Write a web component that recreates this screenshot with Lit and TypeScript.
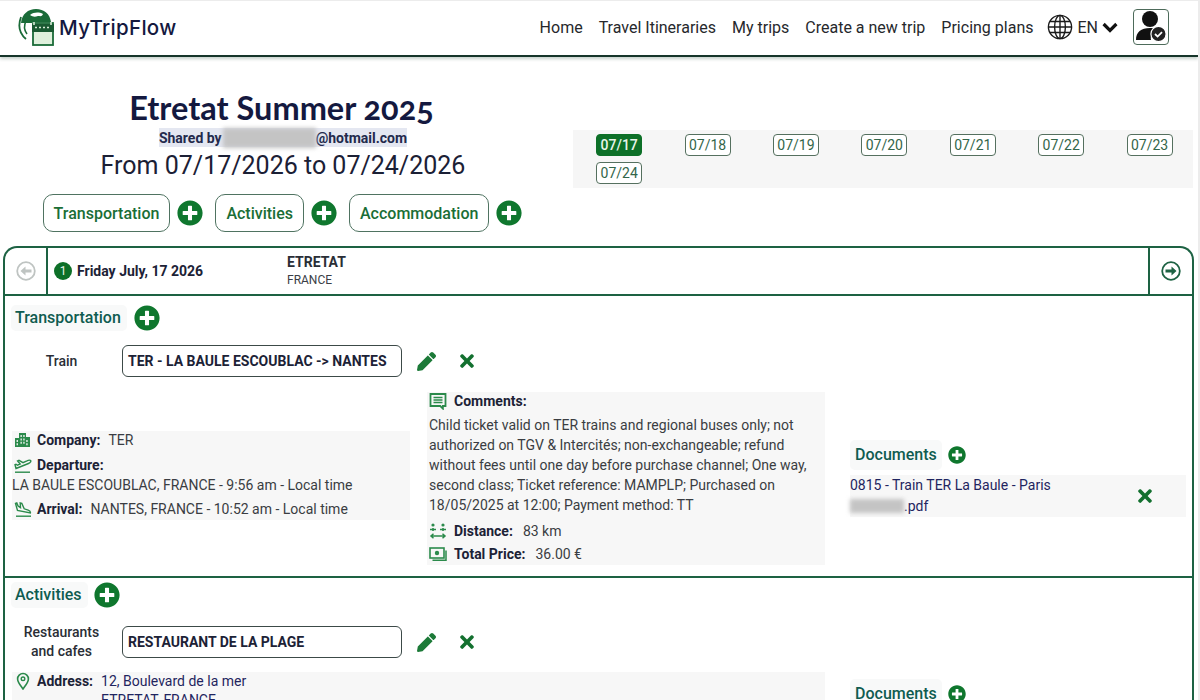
import { LitElement, html, css, svg } from 'lit';
import { customElement } from 'lit/decorators.js';

const plus = (size: number) => html`<svg class="ico" width=${size} height=${size} viewBox="0 0 512 512"><path fill="#0f772e" d="M256 8C119 8 8 119 8 256s111 248 248 248 248-111 248-248S393 8 256 8zm144 276c0 6.6-5.4 12-12 12h-92v92c0 6.6-5.4 12-12 12h-56c-6.6 0-12-5.4-12-12v-92h-92c-6.6 0-12-5.4-12-12v-56c0-6.6 5.4-12 12-12h92v-92c0-6.6 5.4-12 12-12h56c6.6 0 12 5.4 12 12v92h92c6.6 0 12 5.4 12 12v56z"/></svg>`;

const pencil = html`<svg class="ico" width="19" height="19" viewBox="0 0 512 512"><path fill="#1c7a38" d="M497.9 142.1l-46.1 46.1c-4.7 4.7-12.3 4.7-17 0l-111-111c-4.7-4.7-4.7-12.3 0-17l46.1-46.1c18.7-18.7 49.1-18.7 67.9 0l60.1 60.1c18.8 18.7 18.8 49.1 0 67.9zM284.2 99.8L21.6 362.4.4 483.9c-2.9 16.4 11.4 30.6 27.8 27.8l121.5-21.3 262.6-262.6c4.7-4.7 4.7-12.3 0-17l-111-111c-4.8-4.7-12.4-4.7-17.1 0z"/></svg>`;

const cross = html`<svg class="ico" width="16" height="20" viewBox="0 0 352 512"><path fill="#13702f" d="M242.72 256l100.07-100.07c12.28-12.28 12.28-32.19 0-44.48l-22.24-22.24c-12.28-12.28-32.19-12.28-44.48 0L176 189.28 75.93 89.21c-12.28-12.28-32.19-12.28-44.48 0L9.21 111.45c-12.28 12.28-12.28 32.19 0 44.48L109.28 256 9.21 356.07c-12.28 12.28-12.28 32.19 0 44.48l22.24 22.24c12.28 12.28 32.2 12.28 44.48 0L176 322.72l100.07 100.07c12.28 12.28 32.2 12.28 44.48 0l22.24-22.24c12.28-12.28 12.28-32.19 0-44.48L242.72 256z"/></svg>`;

// small outline icons in the detail rows
const detailIcon = (body: unknown) => html`<svg class="ico" width="18" height="18" viewBox="0 0 18 18" fill="none" stroke="#2b8a4b" stroke-width="1.4">${body}</svg>`;

const icons = {
  company: detailIcon(svg`<path fill="#2b8a4b" stroke="none" d="M5 2h7v4h4v10H1V7h4zM6.5 4v2h1.3V4zm2.8 0v2h1.3V4zM6.5 7.5v2h1.3v-2zm2.8 0v2h1.3v-2zM2.6 9v2h1.3V9zm0 3.2v2h1.3v-2zm3.9-1.4v2h1.3v-2zm2.8 0v2h1.3v-2zm3-1.8v2h1.3V9zm0 3.2v2h1.3v-2z"/>`),
  departure: detailIcon(svg`<path d="M1 16.2h15"/><path d="M2 12.5l12.5-5c2-.8 3-2.5 1.8-3.2-1-.5-2.4 0-3.4.5L9 6.6 5 4.4 3.6 5l2.6 3L3.4 9.2 2 8.2 1 8.6z"/>`),
  arrival: detailIcon(svg`<path d="M2 16.2h15"/><path d="M1.5 3.5l1.3-.6 1.3 3.2 2.4 1.6L6.2 3l1.6.4 2.4 5.4 4 1.4c1.5.5 2.4 1.6 2.2 2.8L3.5 10.5z"/>`),
  comments: detailIcon(svg`<path d="M1.5 2h15v12h-2.6v2.6L11.3 14H1.5z" stroke-width="1.8"/><path d="M4.5 5.5h9M4.5 8h9M4.5 10.5h9"/>`),
  distance: detailIcon(svg`<circle cx="4" cy="3" r="1.6" fill="#2b8a4b" stroke="none"/><circle cx="14" cy="3" r="1.6" fill="#2b8a4b" stroke="none"/><path d="M1 7.5h6M11 7.5h6M4 6v3M14 6v3" stroke-width="1.6"/><path d="M2 14h14M4.5 11.8L2 14l2.5 2.2M13.5 11.8L16 14l-2.5 2.2" stroke-width="1.5"/>`),
  price: detailIcon(svg`<rect x="1" y="3" width="14" height="10" stroke-width="1.6"/><circle cx="8" cy="8" r="2.2" fill="#2b8a4b" stroke="none"/><path d="M17 5.5v9.7H3.5" stroke-width="1.5"/>`),
  pin: detailIcon(svg`<path d="M9 17C6 12.8 3.6 10 3.6 6.9a5.4 5.4 0 0 1 10.8 0C14.4 10 12 12.8 9 17z" stroke-width="1.6"/><circle cx="9" cy="6.8" r="1.8"/>`),
};

const dates = ['07/17', '07/18', '07/19', '07/20', '07/21', '07/22', '07/23', '07/24'];

@customElement('app-root')
export class AppRoot extends LitElement {
  static styles = css`
    :host {
      display: block;
      height: 700px;
      overflow: hidden;
      background: #ececec;
      padding-top: 1px;
      box-sizing: border-box;
      font-family: Roboto, "Liberation Sans", sans-serif;
      color: #1c2236;
    }
    * { box-sizing: border-box; }
    .ico { display: block; flex: none; }
    .page { width: 1198px; height: 699px; background: #fff; overflow: hidden; }

    header {
      height: 56px;
      display: flex;
      align-items: center;
      justify-content: space-between;
      padding: 0 29px 2px 18px;
      border-bottom: 2px solid #16352a;
      box-shadow: 0 2px 3px rgba(30, 70, 50, 0.25);
    }
    .brand { display: flex; align-items: center; gap: 5px; }
    .brand-name { font-family: Inter, sans-serif; font-size: 20.5px; font-weight: 500; color: #14193f; letter-spacing: 0.3px; }
    nav { display: flex; align-items: center; gap: 16px; font-size: 16px; color: #26282c; }
    .lang { display: flex; align-items: center; gap: 4px; margin-left: -2px; }
    .user { width: 36px; height: 36px; border: 1px solid #4d6b5a; border-radius: 4px; margin-left: -1px; display: flex; align-items: center; justify-content: center; }

    .trip { display: grid; grid-template-columns: 573px 620px; height: 167px; padding: 32px 0 0; }
    .trip-left { display: flex; flex-direction: column; align-items: center; width: 566px; }
    h1 { margin: 0 3px 0 0; font-family: Lato, sans-serif; font-size: 32.5px; line-height: 38px; font-weight: 700; color: #14193f; font-variant-numeric: oldstyle-nums; }
    .shared { display: inline-flex; align-items: center; height: 19px; margin-top: 1px; background: #e4e7f1; font-size: 14px; font-weight: 700; color: #232a4c; }
    .blur { display: inline-block; width: 93px; height: 20px; margin-left: 1px; background: #c4c4c4; filter: blur(2px); }
    .range { font-size: 25px; line-height: 34px; margin-top: 2px; color: #1b2035; }
    .actions { display: flex; align-items: center; margin-top: 11px; margin-left: -1px; }
    .pill { height: 38px; padding: 0 10px; display: flex; align-items: center; border: 1px solid #4f7361; border-radius: 10px; font-size: 16px; font-weight: 500; color: #1a6e36; }
    .actions .ico { margin: 0 12px 0 7px; }
    .actions .ico:last-child { margin-right: 0; }

    .days { align-self: start; margin-top: 41px; background: #f6f6f6; height: 58px; padding: 4px 0 0 2px; display: grid; grid-template-columns: repeat(7, 88.4px); grid-auto-rows: 22px; row-gap: 6px; justify-items: center; }
    .day { width: 46px; height: 22px; border: 1px solid #55705f; border-radius: 4px; background: #fff; color: #33664a; font-size: 14px; display: flex; align-items: center; justify-content: center; }
    .day.on { background: #0d7028; border-color: #0d7028; color: #e8f5ea; font-weight: 500; }

    .card { margin: 22px 4px 0 3px; border: 2px solid #1d6243; border-radius: 14px 14px 0 0; border-bottom: 0; }
    .card-top { display: grid; grid-template-columns: 43px 1fr 44px; height: 48px; border-bottom: 2px solid #1d6243; }
    .arrow { display: flex; align-items: center; justify-content: center; }
    .arrow:first-child { border-right: 2px solid #1d6243; }
    .arrow:last-child { border-left: 2px solid #1d6243; }
    .day-info { display: flex; align-items: center; padding-left: 6px; }
    .num { width: 18px; height: 18px; margin-top: -1px; border-radius: 50%; background: #0d7028; color: #e8f5ea; font-size: 12px; display: flex; align-items: center; justify-content: center; margin-right: 5px; }
    .day-date { width: 210px; margin-top: -1px; font-size: 14px; font-weight: 700; color: #1c2236; }
    .place { padding-top: 2px; }
    .city { font-size: 14px; font-weight: 700; line-height: 17px; color: #2a2e36; }
    .country { font-size: 12px; font-weight: 400; line-height: 19px; color: #3a3e46; }

    .section + .section { border-top: 2px solid #1d6243; }
    .sec-head { display: flex; align-items: center; gap: 7px; }
    .sec-title { padding: 0 6px 0 4px; background: #f8f9f9; border-radius: 5px; font-size: 16px; font-weight: 500; color: #0f5c50; line-height: 26px; }
    .transport .sec-head { padding: 9px 0 0 6px; }
    .activity .sec-head { padding: 4px 0 0 6px; gap: 6px; }

    .item { display: flex; align-items: center; }
    .item-type { width: 113px; text-align: center; font-size: 14px; font-weight: 500; line-height: 19px; color: #2a2e36; }
    .item-name { width: 280px; height: 32px; margin-left: 4px; padding-left: 5px; display: flex; align-items: center; border: 1px solid #3c4a48; border-radius: 6px; font-size: 14px; font-weight: 700; color: #1c2236; }
    .item .ico:nth-of-type(1) { margin-left: 15px; }
    .item .ico:nth-of-type(2) { margin-left: 23px; }
    .transport .item { margin-top: 14px; }
    .activity .item { margin-top: 15px; }

    .details { display: grid; grid-template-columns: 398px 398px 344px; column-gap: 17px; align-items: center; padding-left: 7px; }
    .details > :nth-child(3) { margin-left: 8px; }
    .transport .details { margin-top: 15px; padding-bottom: 11px; }
    .box { background: #f7f7f7; font-size: 14px; line-height: 20px; color: #3a3d42; }
    .line { display: flex; align-items: center; height: 22px; gap: 5px; padding-left: 2px; }
    .line b { font-weight: 700; color: #1c2236; }
    .line span { margin-left: 3px; }
    .plain { line-height: 19px; }
    .left-box { margin-bottom: 6px; }
    .left-box .line:nth-child(1) { height: 18px; }
    .left-box .line:nth-child(2) { margin-top: 5px; }
    .left-box .line:nth-child(4) { margin-top: 3px; }
    .mid-box { padding-left: 2px; }
    .mid-box .line { padding-left: 0; gap: 7px; }
    .mid-box .line:nth-child(1) { height: 18px; }
    .mid-box .line:nth-child(3) { height: 24px; margin-top: 4px; }
    .comment { margin-top: 5px; }

    .doc-head { display: flex; align-items: center; gap: 6px; }
    .doc-title { padding: 0 5px; line-height: 30px; font-size: 16px; font-weight: 500; color: #0f5c50; background: #f8f9f9; border-radius: 5px; }
    .doc { display: flex; align-items: center; justify-content: space-between; margin-top: 5px; height: 42px; background: #f7f7f7; color: #1f2560; font-size: 14px; line-height: 21px; padding: 0 33px 0 0; }
    .blob { display: inline-block; width: 54px; height: 14px; vertical-align: -2px; background: #c4c4c4; filter: blur(2px); }

    .activity .details { grid-template-columns: 813px 336px; column-gap: 25px; align-items: start; margin-top: 11px; }
    .activity .details > :nth-child(2) { margin-top: 7px; }
    .addr { display: grid; grid-template-columns: auto 1fr; height: 60px; padding: 0 0 0 2px; column-gap: 8px; }
    .addr b { font-weight: 700; color: #1c2236; line-height: 18px; }
    .addr .val { color: #1f2560; line-height: 19px; }
    .addr .head { display: flex; gap: 5px; }
  `;

  render() {
    return html`
      <div class="page">
        <header>
          <div class="brand">
            <svg class="ico" width="36" height="38" viewBox="0 0 36 38">
              <path d="M3 15C4 6 10 1 18 1s14 5 15 13H14v1z" fill="#1a6b38"/>
              <path d="M12 7c4-3 9-3 13-1-1 3-3 2-5 2-3 1-5 1-8-1z" fill="#fff"/>
              <path d="M3 9C0 17 1 25 8 31" fill="none" stroke="#1a6b38" stroke-width="1.8"/>
              <path d="M8 13c-2 4-2 9 1 13" fill="none" stroke="#1a6b38" stroke-width="1.6"/>
              <rect x="15" y="15" width="20" height="22" fill="#dff0dc" stroke="#1a6b38" stroke-width="1.8"/>
              <rect x="14" y="16" width="22" height="8" fill="#1a5a32"/>
              <path d="M17 19.5h2M21 19.5h2M25 19.5h2M29 19.5h2M16 14v3M33 14v3" stroke="#d8ecd8" stroke-width="1.6"/>
            </svg>
            <span class="brand-name">MyTripFlow</span>
          </div>
          <nav>
            <span>Home</span>
            <span>Travel Itineraries</span>
            <span>My trips</span>
            <span>Create a new trip</span>
            <span>Pricing plans</span>
            <div class="lang">
              <svg class="ico" width="26" height="26" viewBox="0 0 26 26" fill="none" stroke="#1b1b1b" stroke-width="1.4">
                <circle cx="13" cy="13" r="11.6"/>
                <ellipse cx="13" cy="13" rx="5.4" ry="11.6"/>
                <path d="M13 1.4v23.2M1.4 13h23.2M3 7.5h20M3 18.5h20"/>
              </svg>
              <span>EN</span>
              <svg class="ico" width="16" height="11" viewBox="0 0 16 11" fill="none" stroke="#111" stroke-width="3.2"><path d="M1.6 2l6.4 6.4L14.4 2"/></svg>
            </div>
            <div class="user">
              <svg class="ico" width="32" height="32" viewBox="0 0 32 32">
                <circle cx="15" cy="8" r="8" fill="#111"/>
                <path d="M1 29c0-8 5-12 14-12 3 0 5 .4 7 1.2-4 1-7 5.8-6 10.8z" fill="#111"/>
                <circle cx="23.5" cy="23" r="7.6" fill="#222" stroke="#fff" stroke-width="1.2"/>
                <path d="M20 23l2.6 2.6 4.4-4.4" fill="none" stroke="#fff" stroke-width="1.8"/>
              </svg>
            </div>
          </nav>
        </header>

        <section class="trip">
          <div class="trip-left">
            <h1>Etretat Summer 2025</h1>
            <div class="shared">Shared by<i class="blur"></i>@hotmail.com</div>
            <div class="range">From 07/17/2026 to 07/24/2026</div>
            <div class="actions">
              <div class="pill">Transportation</div>${plus(26)}
              <div class="pill">Activities</div>${plus(26)}
              <div class="pill">Accommodation</div>${plus(26)}
            </div>
          </div>
          <div class="days">
            ${dates.map((d, i) => html`<div class="day ${i === 0 ? 'on' : ''}">${d}</div>`)}
          </div>
        </section>

        <div class="card">
          <div class="card-top">
            <div class="arrow">
              <svg class="ico" width="20" height="20" viewBox="0 0 20 20"><circle cx="10" cy="10" r="8.8" fill="none" stroke="#bfc4c2" stroke-width="1.8"/><path d="M4.5 10l5-4.5v3h6v3h-6v3z" fill="#bfc4c2"/></svg>
            </div>
            <div class="day-info">
              <div class="num">1</div>
              <div class="day-date">Friday July, 17 2026</div>
              <div class="place">
                <div class="city">ETRETAT</div>
                <div class="country">FRANCE</div>
              </div>
            </div>
            <div class="arrow">
              <svg class="ico" width="20" height="20" viewBox="0 0 20 20"><circle cx="10" cy="10" r="8.8" fill="none" stroke="#1d6243" stroke-width="1.8"/><path d="M15.5 10l-5-4.5v3h-6v3h6v3z" fill="#1d6243"/></svg>
            </div>
          </div>

          <div class="section transport">
            <div class="sec-head"><span class="sec-title">Transportation</span>${plus(26)}</div>
            <div class="item">
              <div class="item-type">Train</div>
              <div class="item-name">TER - LA BAULE ESCOUBLAC -> NANTES</div>
              ${pencil}${cross}
            </div>
            <div class="details">
              <div class="box left-box">
                <div class="line">${icons.company}<b>Company:</b><span>TER</span></div>
                <div class="line">${icons.departure}<b>Departure:</b></div>
                <div class="plain">LA BAULE ESCOUBLAC, FRANCE - 9:56 am - Local time</div>
                <div class="line">${icons.arrival}<b>Arrival:</b><span>NANTES, FRANCE - 10:52 am - Local time</span></div>
              </div>
              <div class="box mid-box">
                <div class="line">${icons.comments}<b>Comments:</b></div>
                <div class="comment">Child ticket valid on TER trains and regional buses only; not authorized on TGV &amp; Intercités; non-exchangeable; refund without fees until one day before purchase channel; One way, second class; Ticket reference: MAMPLP; Purchased on 18/05/2025 at 12:00; Payment method: TT</div>
                <div class="line">${icons.distance}<b>Distance:</b><span>83 km</span></div>
                <div class="line">${icons.price}<b>Total Price:</b><span>36.00 €</span></div>
              </div>
              <div>
                <div class="doc-head"><span class="doc-title">Documents</span>${plus(18)}</div>
                <div class="doc">
                  <div>0815 - Train TER La Baule - Paris<br /><i class="blob"></i>.pdf</div>
                  ${cross}
                </div>
              </div>
            </div>
          </div>

          <div class="section activity">
            <div class="sec-head"><span class="sec-title">Activities</span>${plus(26)}</div>
            <div class="item">
              <div class="item-type">Restaurants<br />and cafes</div>
              <div class="item-name">RESTAURANT DE LA PLAGE</div>
              ${pencil}${cross}
            </div>
            <div class="details">
              <div class="box addr">
                <div class="head">${icons.pin}<b>Address:</b></div>
                <div class="val">12, Boulevard de la mer<br />ETRETAT, FRANCE</div>
              </div>
              <div>
                <div class="doc-head"><span class="doc-title">Documents</span>${plus(18)}</div>
              </div>
            </div>
          </div>
        </div>
      </div>
    `;
  }
}
